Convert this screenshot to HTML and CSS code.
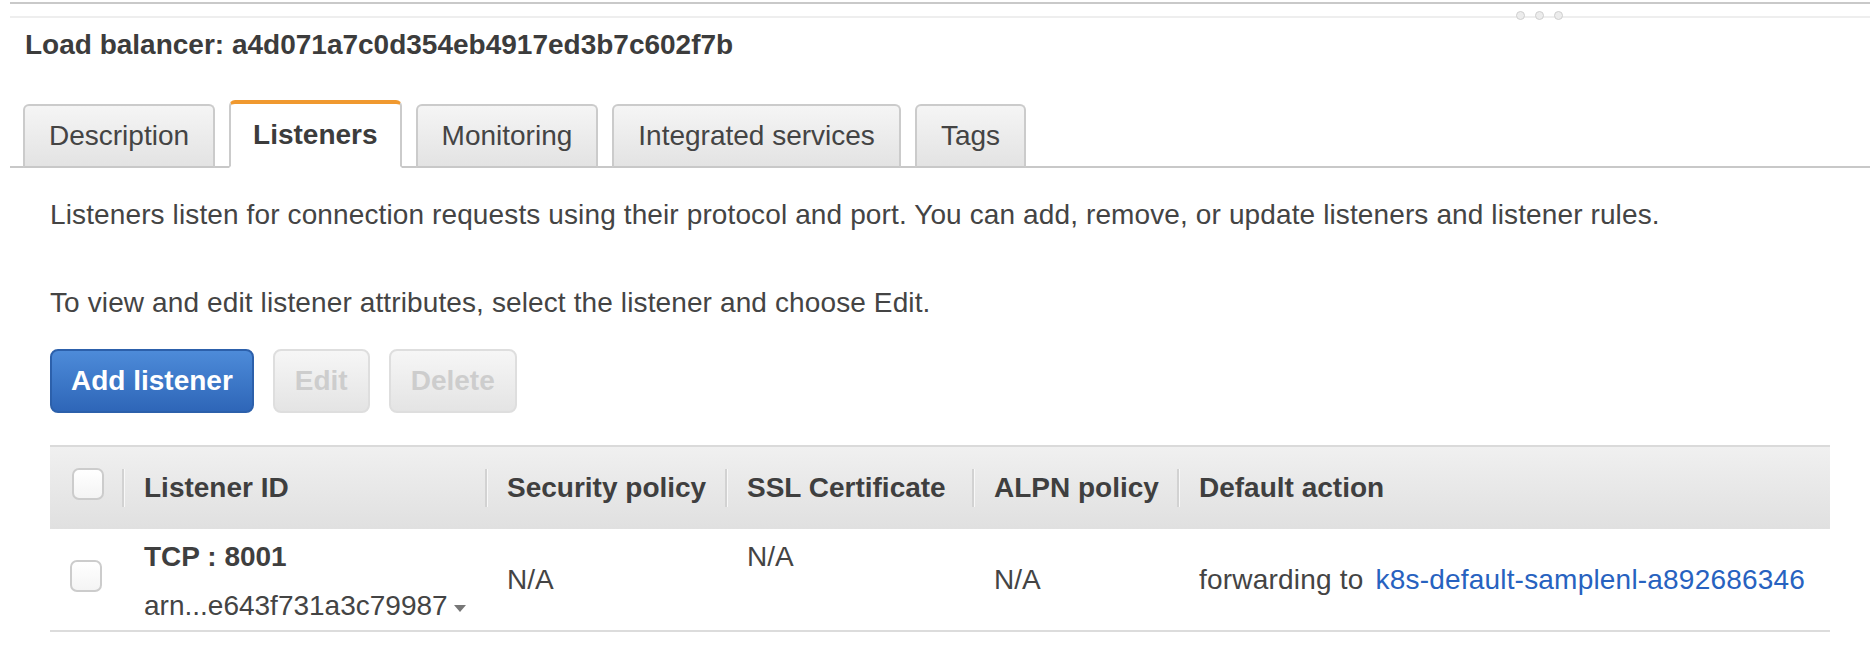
FILE: index.html
```html
<!DOCTYPE html>
<html>
<head>
<meta charset="utf-8">
<link rel="stylesheet" href="styles.css">
</head>
<body>
<div class="panel">
  <div class="topline"></div>
  <div class="splitter">
    <div class="grip"><span></span><span></span><span></span></div>
  </div>
  <h1 class="title">Load balancer: a4d071a7c0d354eb4917ed3b7c602f7b</h1>
  <div class="tabs">
    <div class="tab">Description</div>
    <div class="tab active">Listeners</div>
    <div class="tab">Monitoring</div>
    <div class="tab">Integrated services</div>
    <div class="tab">Tags</div>
  </div>
  <div class="content">
    <p class="intro">Listeners listen for connection requests using their protocol and port. You can add, remove, or update listeners and listener rules.</p>
    <p class="intro second">To view and edit listener attributes, select the listener and choose Edit.</p>
    <div class="actions">
      <button class="btn primary">Add listener</button>
      <button class="btn disabled">Edit</button>
      <button class="btn disabled">Delete</button>
    </div>
    <div class="table">
      <div class="thead">
        <div class="th check"><span class="checkbox"></span></div>
        <div class="th"><span class="label">Listener ID</span></div>
        <div class="th"><span class="label">Security policy</span></div>
        <div class="th"><span class="label">SSL Certificate</span></div>
        <div class="th"><span class="label">ALPN policy</span></div>
        <div class="th"><span class="label">Default action</span></div>
      </div>
      <div class="trow">
        <div class="td check"><span class="checkbox row-box"></span></div>
        <div class="td id">
          <div class="proto">TCP : 8001</div>
          <div class="arn">arn...e643f731a3c79987<svg class="caret" width="12" height="7" viewBox="0 0 12 7"><path d="M0 0 L12 0 L6 7 Z" fill="#777"/></svg></div>
        </div>
        <div class="td mid">N/A</div>
        <div class="td top">N/A</div>
        <div class="td mid">N/A</div>
        <div class="td mid action">forwarding to <a class="link" href="#">k8s-default-samplenl-a892686346</a></div>
      </div>
    </div>
  </div>
</div>
</body>
</html>
```

FILE: styles.css
```css
html, body {
  margin: 0;
  padding: 0;
  background: #ffffff;
}

body {
  font-family: "Liberation Sans", Arial, Helvetica, sans-serif;
  font-size: 28px;
  color: #444444;
}

.panel {
  margin-left: 10px;
  padding-top: 2px;
}

.topline {
  height: 2px;
  background: #c9c9c9;
}

.splitter {
  position: relative;
  height: 12px;
  border-bottom: 2px solid #eeeeee;
}

.grip {
  position: absolute;
  left: 1506px;
  top: 7px;
  display: flex;
  gap: 10px;
}

.grip span {
  width: 7px;
  height: 7px;
  border-radius: 50%;
  border: 1.5px solid #cfcfcf;
  background: #ececec;
}

.title {
  margin: 10px 0 0 15px;
  font-size: 28px;
  line-height: 34px;
  font-weight: bold;
  color: #3c3c3c;
}

.tabs {
  display: flex;
  align-items: flex-end;
  gap: 14px;
  margin-top: 38px;
  padding-left: 13px;
  border-bottom: 2px solid #c8c8c8;
}

.tab {
  margin-bottom: -2px;
  padding: 0 24px;
  line-height: 60px;
  border: 2px solid #cbcbcb;
  border-bottom-color: #c8c8c8;
  border-radius: 6px 6px 0 0;
  background: linear-gradient(#f5f5f5, #e3e3e3);
  color: #444444;
  white-space: nowrap;
}

.tab.active {
  line-height: 62px;
  border-top: 4px solid #f0992f;
  border-bottom-color: #ffffff;
  background: #ffffff;
  font-weight: bold;
  color: #3c3c3c;
  padding: 0 22px;
}

.content {
  padding-left: 40px;
}

.intro {
  margin: 29px 0 0;
  line-height: 36px;
  letter-spacing: 0.12px;
}

.intro.second {
  margin-top: 52px;
}

.actions {
  display: flex;
  gap: 19px;
  margin-top: 28px;
}

.btn {
  height: 64px;
  padding: 0 19px;
  border-radius: 8px;
  font-family: inherit;
  font-size: 28px;
  font-weight: bold;
}

.btn.primary {
  border: 2px solid #2c60ab;
  background: linear-gradient(#4d8bd9, #2e66b8);
  color: #ffffff;
}

.btn.disabled {
  padding: 0 20px;
  border: 2px solid #dedede;
  background: linear-gradient(#f6f6f6, #e4e4e4);
  color: #cdcdcd;
}

.table {
  margin-top: 32px;
  width: 1780px;
}

.thead, .trow {
  display: grid;
  grid-template-columns: 72px 363px 240px 247px 205px 1fr;
}

.thead {
  height: 82px;
  border-top: 2px solid #dadada;
  background: linear-gradient(#f0f0f0, #e0e0e0);
}

.th {
  display: flex;
  align-items: center;
  font-weight: bold;
  color: #3f3f3f;
  white-space: nowrap;
}

.th .label {
  display: flex;
  align-items: center;
  height: 38px;
  padding-left: 20px;
  border-left: 2px solid #d2d2d2;
  box-shadow: inset 1px 0 0 #f8f8f8;
}

.th.check {
  padding-left: 22px;
}

.checkbox {
  display: block;
  width: 28px;
  height: 28px;
  border: 2px solid #cccccc;
  border-radius: 7px;
  background: linear-gradient(#ffffff, #f4f4f4);
  margin-bottom: 8px;
}

.trow {
  border-bottom: 2px solid #dcdcdc;
}

.td {
  padding-left: 22px;
  line-height: 36px;
  white-space: nowrap;
}

.td.check {
  padding-left: 20px;
  align-self: center;
}

.row-box {
  margin-bottom: 7px;
}

.td.id {
  padding-top: 10px;
  padding-bottom: 6px;
}

.proto {
  font-weight: bold;
  color: #3f3f3f;
}

.arn {
  margin-top: 13px;
  display: flex;
  align-items: center;
}

.caret {
  margin-left: 6px;
  margin-top: 4px;
}

.td.mid {
  align-self: center;
}

.td.top {
  align-self: start;
  padding-top: 10px;
}

.td.action {
  letter-spacing: 0.2px;
}

.link {
  color: #2762c0;
  text-decoration: none;
  margin-left: 4px;
}
```
